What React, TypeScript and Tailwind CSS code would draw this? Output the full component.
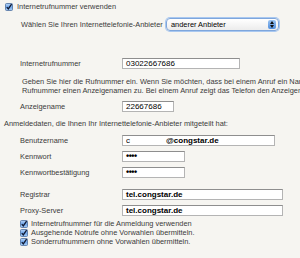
import React from "react";

function Check({ className = "" }: { className?: string }) {
  return (
    <svg width="8" height="8" viewBox="0 0 8 8" className={className}>
      <defs>
        <linearGradient id="cbg" x1="0" y1="0" x2="0" y2="1">
          <stop offset="0" stopColor="#b9d6f7" />
          <stop offset="0.5" stopColor="#6fa6ea" />
          <stop offset="1" stopColor="#a9cff7" />
        </linearGradient>
      </defs>
      <rect x="0.5" y="0.5" width="7" height="7" rx="1" fill="url(#cbg)" stroke="#4d6f9e" strokeWidth="0.8" />
      <path d="M1.8 4.1 L3.3 5.9 L6.6 1.2" fill="none" stroke="#101830" strokeWidth="1.3" />
    </svg>
  );
}

function Field({
  label,
  width,
  children,
  className = "",
}: {
  label: string;
  width: string;
  children?: React.ReactNode;
  className?: string;
}) {
  return (
    <div className={`flex items-center h-[11px] ${className}`}>
      <div className="w-[122px] pl-[20px] shrink-0">{label}</div>
      <div
        className={`${width} h-[11px] bg-white border border-[#b4b4b4] border-t-[#8e8e8e] flex items-center pl-[3px] text-[8px] text-black whitespace-nowrap overflow-hidden`}
      >
        {children}
      </div>
    </div>
  );
}

export default function App() {
  return (
    <div className="w-[300px] h-[258px] overflow-hidden bg-[#f6f5f1] font-['Liberation_Sans',Arial,sans-serif] text-[7.4px] leading-none text-[#3a3a3a] flex flex-col whitespace-nowrap">
      {/* Kopfzeile */}
      <div className="mt-[3px] h-[8px] flex items-center pl-[5px]">
        <Check />
        <span className="ml-[4px]">Internetrufnummer verwenden</span>
      </div>

      <div className="mt-[7px] h-[13px] flex items-center pl-[21px]">
        <span className="w-[145px]">Wählen Sie Ihren Internettelefonie-Anbieter</span>
        <div className="w-[113px] h-[13px] rounded-[4px] border border-[#7ea6dc] shadow-[0_0_0_1px_#a9c8f0] bg-gradient-to-b from-white to-[#ececec] flex items-center pl-[4px] text-black">
          <span className="flex-1">anderer Anbieter</span>
          <div className="w-[8px] h-[9px] mr-[2px] rounded-[2px] bg-gradient-to-b from-[#9cc4f2] to-[#4f8ddc] flex flex-col items-center justify-center gap-[1px]">
            <svg width="4" height="3" viewBox="0 0 4 3">
              <path d="M0 3 L2 0 L4 3 Z" fill="#111" />
            </svg>
            <svg width="4" height="3" viewBox="0 0 4 3">
              <path d="M0 0 L2 3 L4 0 Z" fill="#111" />
            </svg>
          </div>
        </div>
      </div>

      <Field label="Internetrufnummer" width="w-[118px]" className="mt-[27px]">
        03022667686
      </Field>

      <div className="mt-[8px] pl-[22px] leading-[9px]">
        <div>
          Geben Sie hier die Rufnummer ein. Wenn Sie möchten, dass bei einem Anruf ein Name angezeigt wird, ordnen Sie der
        </div>
        <div>
          Rufnummer einen Anzeigenamen zu. Bei einem Anruf zeigt das Telefon den Anzeigenamen an.
        </div>
      </div>

      <Field label="Anzeigename" width="w-[52px]" className="mt-[6px]">
        22667686
      </Field>

      <div className="mt-[7px] h-[10px] flex items-center pl-[4px]">
        Anmeldedaten, die Ihnen Ihr Internettelefonie-Anbieter mitgeteilt hat:
      </div>

      <Field label="Benutzername" width="w-[153px]" className="mt-[6px]">
        <span>c</span>
        <span className="ml-[36px] font-bold">@congstar.de</span>
      </Field>
      <Field label="Kennwort" width="w-[63px]" className="mt-[5px]">
        <span className="font-bold text-[9px] tracking-[-0.5px]">••••</span>
      </Field>
      <Field label="Kennwortbestätigung" width="w-[63px]" className="mt-[5px]">
        <span className="font-bold text-[9px] tracking-[-0.5px]">••••</span>
      </Field>

      <Field label="Registrar" width="w-[161px]" className="mt-[11px]">
        <span className="font-bold">tel.congstar.de</span>
      </Field>
      <Field label="Proxy-Server" width="w-[161px]" className="mt-[5px]">
        <span className="font-bold">tel.congstar.de</span>
      </Field>

      <div className="mt-[4px] flex flex-col gap-[1px] pl-[20px]">
        <div className="h-[8px] flex items-center">
          <Check />
          <span className="ml-[3px]">Internetrufnummer für die Anmeldung verwenden</span>
        </div>
        <div className="h-[8px] flex items-center">
          <Check />
          <span className="ml-[3px]">Ausgehende Notrufe ohne Vorwahlen übermitteln.</span>
        </div>
        <div className="h-[8px] flex items-center">
          <Check />
          <span className="ml-[3px]">Sonderrufnummern ohne Vorwahlen übermitteln.</span>
        </div>
      </div>
    </div>
  );
}
